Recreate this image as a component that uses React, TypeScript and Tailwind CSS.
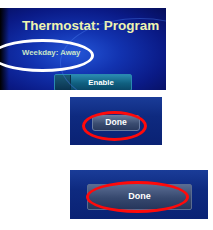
export default function App() {
  return (
    <div className="w-[213px] h-[230px] bg-white flex flex-col font-['Liberation_Sans',Arial,sans-serif]">
      {/* program panel */}
      <div className="relative mt-[8px] w-[166px] h-[82px] overflow-hidden bg-[linear-gradient(to_right,#000_0px,rgba(0,0,0,0)_9px),radial-gradient(ellipse_at_45%_55%,#2456d8_0%,#1233b0_35%,#0a1a86_70%,#060e5a_100%)]">
        <div className="absolute left-[60px] top-[10px] w-[160px] h-[90px] rounded-[50%] border border-[#4a7cf0]/40" />
        <div className="pl-[22px] pt-[10px] text-[13.5px] leading-[16px] font-bold text-[#eef4b0] whitespace-nowrap">
          Thermostat: Program
        </div>
        <div className="pl-[22px] pt-[14px] text-[7.8px] leading-[10px] font-bold text-[#c8e4c8] whitespace-nowrap">
          Weekday: Away
        </div>
        <div className="ml-[54px] mt-[16px] w-[78px] h-[17px] flex rounded-[2px] overflow-hidden border border-[#2a88b0] bg-[linear-gradient(to_bottom,#2a8ab0,#106080_55%,#0a4868)]">
          <div className="w-[16px] h-full bg-[linear-gradient(to_bottom,#1a5a78,#0a3450)] border-r border-[#0a3048]" />
          <div className="flex-1 flex items-center justify-center text-[7.8px] font-bold text-white">
            Enable
          </div>
        </div>
        <div className="absolute left-[-9px] top-[31px] w-[103px] h-[33px] rounded-[50%] border-[3.5px] border-white" />
      </div>

      {/* done panel small */}
      <div className="relative ml-[70px] mt-[7px] w-[92px] h-[48px] bg-[linear-gradient(to_bottom,#1a3c98,#0e2a80_40%,#0a2274)] flex items-center">
        <div className="ml-[22px] mt-[3px] w-[48px] h-[16px] rounded-[3px] border border-[#6a7ca0] bg-[linear-gradient(to_bottom,#66789a,#3a4c70_55%,#2a3a5e)] flex items-center justify-center text-[8.6px] font-bold text-white">
          Done
        </div>
        <div className="absolute left-[12px] top-[14px] w-[65px] h-[30px] rounded-[50%] border-[3.5px] border-[#ff0a0a]" />
      </div>

      {/* done panel wide */}
      <div className="relative ml-[70px] mt-[25px] w-[138px] h-[49px] bg-[linear-gradient(to_bottom,#1a3c98,#0e2a80_40%,#0a2274)] flex items-start">
        <div className="ml-[17px] mt-[14px] w-[105px] h-[26px] rounded-[2px] border border-[#5a6c90] bg-[linear-gradient(to_bottom,#5a6c92,#36486e_55%,#26365c)] flex items-center justify-center text-[9px] font-bold text-white">
          Done
        </div>
        <div className="absolute left-[16px] top-[11px] w-[103px] h-[32px] rounded-[50%] border-[3.5px] border-[#ff0a0a]" />
      </div>
    </div>
  );
}
